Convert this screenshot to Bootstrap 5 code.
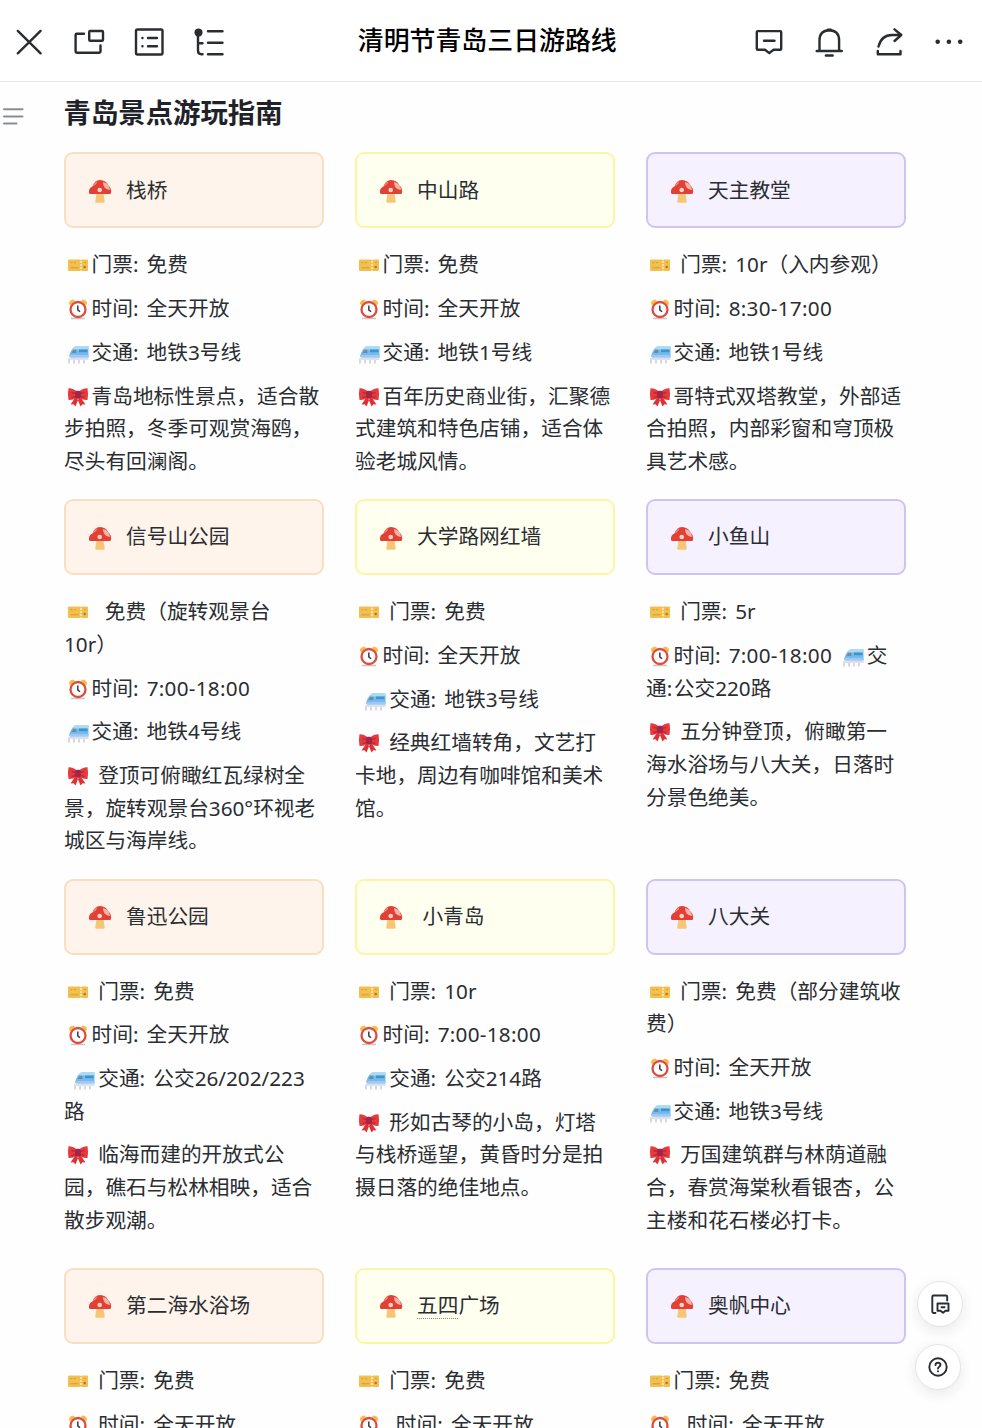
<!DOCTYPE html>
<html lang="zh-CN">
<head>
<meta charset="utf-8">
<meta name="viewport" content="width=device-width, initial-scale=1">
<title>清明节青岛三日游路线</title>
<link href="https://cdn.jsdelivr.net/npm/bootstrap@5.3.0/dist/css/bootstrap.min.css" rel="stylesheet">
<style>
html,body{height:1428px;overflow:hidden}
body{font-family:"Noto Sans","Noto Sans CJK SC",sans-serif;color:#2a2d31;background:#fefefe;font-size:20.7px;line-height:32.7px}
.topbar{height:82px;border-bottom:1px solid #e9e9e8;padding:2px 3px 0 0;background:#fff}
.tools{margin-left:-1.5px}
.tool{width:60px;height:32px;color:#2a2d30;display:flex;justify-content:center}
.ico{width:32px;height:32px;fill:none;stroke:currentColor;stroke-width:2.4;stroke-linecap:round;stroke-linejoin:round;flex:none}
.doc-title{font-family:"Noto Sans CJK SC",sans-serif;font-size:25.9px;font-weight:500;color:#000;margin:0;line-height:32px;padding:0 3px 5px 0}
.outline-toggle{position:absolute;left:2px;top:107px;width:22px;height:19px;stroke:#8a8d91;stroke-width:2;stroke-linecap:round}
.guide{padding:9px 0 0 64px;width:906px}
.guide h2{font-family:"Noto Sans CJK SC",sans-serif;font-size:27.4px;line-height:40px;font-weight:700;color:#1f2329;margin:0 0 21.4px -.5px}
.trio{display:grid;grid-template-columns:repeat(3,260px);column-gap:31px}
.callout{height:76px;border:2px solid;border-radius:9px;padding:0 0 1px 21.5px;margin-bottom:20px}
.peach{background:#fef4eb;border-color:#f8dfbf}
.lemon{background:#fffff0;border-color:#faf6a4}
.lilac{background:#f5f1fe;border-color:#cfc4f1}
.callout .shroom{width:24px;height:26px;margin-right:14.5px;flex:none;position:relative;top:1px}
.trio p{margin:0 0 11px;white-space:nowrap;word-spacing:1.3px;text-indent:-.5px}
.emo{width:22px;height:22px;margin:0 3px;vertical-align:-4px}
.cn{letter-spacing:1.5px}
.hm{letter-spacing:.28px}
.typo{text-decoration:underline dotted #888 1px;text-underline-offset:5px}
.fab{position:fixed;width:46px;height:46px;border-radius:50%;background:#fff;border:1px solid #e2e3e5;box-shadow:0 4px 14px rgba(31,35,41,.09);color:#2a2d30}
.fab svg{width:24px;height:24px;fill:none;stroke:currentColor;stroke-width:1.9;stroke-linecap:round;stroke-linejoin:round}
</style>
</head>
<body>
<svg class="d-none">
<symbol id="shroom" viewBox="0 0 24 26"><path d="M8.500 15h7l1.200 8.200q.2 1.500-1.500 1.600H8.800q-1.700-.1-1.500-1.600z" fill="#f6c678"/><path d="M1 14.800Q.4 10.300 4.500 8.500Q6.500 2.300 12 2Q18.200 2.300 20.200 7.200Q23.700 10 23 14.800Q23 16 21.500 16H2.500Q1.100 16 1 14.800z" fill="#e23f35"/><circle cx="11.700" cy="12" r="2.300" fill="#fbd3c7"/><path d="M15 4Q21.300 5.200 22 12Q18.500 12.200 16.500 9.300Q15 6.800 15 4z" fill="#f6b2a4"/><path d="M4.500 8.500Q6 4.700 9 3.200Q9.500 6 4.500 8.500z" fill="#f28b7e"/></symbol>
<symbol id="ticket" viewBox="0 0 22 22"><path d="M2 5.500H13l1 .8 1-.8h5q1 0 1 1V16q0 1-1 1h-5l-1-.8-1 .8H2q-1 0-1-1V6.500q0-1 1-1z" fill="#f4c04d"/><path d="M14 7v9" stroke="#fff4cf" stroke-width="1.300" stroke-dasharray="2 1"/><path d="M3.500 8.700h2m1.500 0h2M3.500 13.800h8" stroke="#c99a45" stroke-width="1"/><circle cx="17.700" cy="13" r="1.300" fill="#ad7938"/><path d="M17 8.500h2" stroke="#d39c36"/></symbol>
<symbol id="clock" viewBox="0 0 22 22"><path d="M2 6Q1.500 2 6.500 1.500L8 3 3.500 7.500zM20 6q.5-4-4.500-4.500L14 3l4.500 4.500z" fill="#f6bd4b"/><path d="M4 20.500h14" stroke="#c9c6c4" stroke-width="1.500"/><circle cx="11" cy="11.500" r="7.500" fill="#fff" stroke="#df4c3e" stroke-width="2.300"/><path d="M10.800 7.500v4.300l2.200 2" stroke="#383a4b" stroke-width="1.500" fill="none"/></symbol>
<symbol id="train" viewBox="0 0 22 22"><path d="M8 4.500h13.500V15.500H3.500Q2 15.500 2.300 13.500Q4 7 8 4.500z" fill="#6dbdee"/><path d="M8 4.500h13.500v3H5.500Q6.500 5.500 8 4.500z" fill="#a9dbf5"/><path d="M12 7.500h8.500v2.700H12z" fill="#4591cb"/><path d="M6.300 7.800h3V11H4.600z" fill="#74899a"/><path d="M2.300 13h19.200V15.500H3.500Q2 15.500 2.300 13z" fill="#a7c4f5"/><path d="M1 17h20.500" stroke="#c3cfd8" stroke-width="1.200"/><path d="M2 18v3.500m5-3.500v3.500m5-3.500v3.500m5-3.500v3.500" stroke="#c9ced3" stroke-width="1.500"/></symbol>
<symbol id="bow" viewBox="0 0 22 22"><path d="M9 10.500L3.500 18.500l3-.2L8.500 20.500 11.500 13zM13 10.500l5.500 8-3-.2-2 2.200L10.500 13z" fill="#dc3236"/><path d="M10 5.500Q5 1.800 1.500 2.300Q.3 8.500 1.500 14Q5.500 14.500 10 11.500zM12 5.500q5-3.700 8.500-3.200 1.200 6.200 0 11.700-4 .5-8.500-2.500z" fill="#e63a3d"/><path d="M9 7.500L4.500 6.500M9 10.500L4.500 11.500M13 7.500l4.500-1M13 10.500l4.500 1" stroke="#bb2b40" stroke-width="1.300"/><rect x="8" y="4.800" width="6" height="7.400" rx="2" fill="#a72447"/></symbol>
</svg>

<header class="topbar d-flex align-items-center">
  <div class="tools d-flex">
    <a class="tool"><svg class="ico" viewBox="0 0 32 32"><path d="M4.800 4.900l22.800 22.400M27.600 4.900L4.800 27.300"/></svg></a>
    <a class="tool"><svg class="ico" viewBox="0 0 32 32"><path d="M11 7.700H3.800Q2.600 7.700 2.600 8.900V25.600Q2.600 26.800 3.800 26.800H26.300Q27.500 26.800 27.500 25.600V19.500"/><rect x="16.200" y="5" width="13.800" height="9.800" rx="1"/></svg></a>
    <a class="tool"><svg class="ico" viewBox="0 0 32 32"><rect x="3" y="3.500" width="26.500" height="25" rx="1.500"/><path d="M9.400 12h.1M9.400 20.200h.1M15 12h9M15 20.200h9"/></svg></a>
    <a class="tool"><svg class="ico" viewBox="0 0 32 32"><circle cx="5.500" cy="6.500" r="2.900" fill="currentColor"/><path d="M5 8V24.500Q5 28.200 8.500 28.200H9.500M5 17.300H9.500M15 5.200H29.500M15 16.800H29.500M15 28.200H29.500"/></svg></a>
  </div>
  <h1 class="doc-title flex-grow-1 text-center">清明节青岛三日游路线</h1>
  <div class="d-flex">
    <a class="tool"><svg class="ico" viewBox="0 0 32 32"><path d="M4.800 5.100H27.200Q28.200 5.100 28.200 6.100V22.700Q28.200 23.700 27.200 23.700H20.500L16.300 27.100 12 23.700H4.800Q3.800 23.700 3.800 22.700V6.100Q3.800 5.100 4.800 5.100zM11 14.700H21.500"/></svg></a>
    <a class="tool"><svg class="ico" viewBox="0 0 32 32"><path d="M6.500 24.800V14.500Q6.500 4.500 16.300 4.300Q26.100 4.500 26.100 14.500V24.800M3.700 25H28.800M12.900 29.500H19.700M14.800 3.700H17.800"/></svg></a>
    <a class="tool"><svg class="ico" viewBox="0 0 32 32"><path d="M5.500 20.500Q8.500 9 19 9H27.500M21.500 3.300L28.300 9 21.500 15M4.800 25V28.300H27.500V25"/></svg></a>
    <a class="tool"><svg class="ico" viewBox="0 0 32 32"><g fill="currentColor" stroke="none"><circle cx="4.700" cy="15.800" r="2.300"/><circle cx="15.900" cy="15.800" r="2.300"/><circle cx="27.200" cy="15.800" r="2.300"/></g></svg></a>
  </div>
</header>
<svg class="outline-toggle" viewBox="0 0 22 19"><path d="M2 2.300H20.500M2 9.500H20.500M2 16.500H14.500"/></svg>

<main class="guide">
  <h2>青岛景点游玩指南</h2>

  <div class="trio" style="margin-bottom:10.5px">
    <section>
      <div class="callout peach d-flex align-items-center"><svg class="shroom"><use href="#shroom"/></svg>栈桥</div>
      <p><svg class="emo"><use href="#ticket"/></svg>门票<span class="cn">:</span> 免费</p>
      <p><svg class="emo"><use href="#clock"/></svg>时间<span class="cn">:</span> 全天开放</p>
      <p><svg class="emo"><use href="#train"/></svg>交通<span class="cn">:</span> 地铁3号线</p>
      <p><svg class="emo"><use href="#bow"/></svg>青岛地标性景点，适合散<br>步拍照，冬季可观赏海鸥，<br>尽头有回澜阁。</p>
    </section>
    <section>
      <div class="callout lemon d-flex align-items-center"><svg class="shroom"><use href="#shroom"/></svg>中山路</div>
      <p><svg class="emo"><use href="#ticket"/></svg>门票<span class="cn">:</span> 免费</p>
      <p><svg class="emo"><use href="#clock"/></svg>时间<span class="cn">:</span> 全天开放</p>
      <p><svg class="emo"><use href="#train"/></svg>交通<span class="cn">:</span> 地铁1号线</p>
      <p><svg class="emo"><use href="#bow"/></svg>百年历史商业街，汇聚德<br>式建筑和特色店铺，适合体<br>验老城风情。</p>
    </section>
    <section>
      <div class="callout lilac d-flex align-items-center"><svg class="shroom"><use href="#shroom"/></svg>天主教堂</div>
      <p><svg class="emo"><use href="#ticket"/></svg>&nbsp;门票<span class="cn">:</span> 10r（入内参观）</p>
      <p><svg class="emo"><use href="#clock"/></svg>时间<span class="cn">:</span> <span class="hm">8:30-17:00</span></p>
      <p><svg class="emo"><use href="#train"/></svg>交通<span class="cn">:</span> 地铁1号线</p>
      <p><svg class="emo"><use href="#bow"/></svg>哥特式双塔教堂，外部适<br>合拍照，内部彩窗和穹顶极<br>具艺术感。</p>
    </section>
  </div>

  <div class="trio" style="margin-bottom:10.5px">
    <section>
      <div class="callout peach d-flex align-items-center"><svg class="shroom"><use href="#shroom"/></svg>信号山公园</div>
      <p><svg class="emo"><use href="#ticket"/></svg>&nbsp;&nbsp;免费（旋转观景台<br>10r）</p>
      <p><svg class="emo"><use href="#clock"/></svg>时间<span class="cn">:</span> <span class="hm">7:00-18:00</span></p>
      <p><svg class="emo"><use href="#train"/></svg>交通<span class="cn">:</span> 地铁4号线</p>
      <p><svg class="emo"><use href="#bow"/></svg>&nbsp;登顶可俯瞰红瓦绿树全<br>景，旋转观景台360°环视老<br>城区与海岸线。</p>
    </section>
    <section>
      <div class="callout lemon d-flex align-items-center"><svg class="shroom"><use href="#shroom"/></svg>大学路网红墙</div>
      <p><svg class="emo"><use href="#ticket"/></svg>&nbsp;门票<span class="cn">:</span> 免费</p>
      <p><svg class="emo"><use href="#clock"/></svg>时间<span class="cn">:</span> 全天开放</p>
      <p>&nbsp;<svg class="emo"><use href="#train"/></svg>交通<span class="cn">:</span> 地铁3号线</p>
      <p><svg class="emo"><use href="#bow"/></svg>&nbsp;经典红墙转角，文艺打<br>卡地，周边有咖啡馆和美术<br>馆。</p>
    </section>
    <section>
      <div class="callout lilac d-flex align-items-center"><svg class="shroom"><use href="#shroom"/></svg>小鱼山</div>
      <p><svg class="emo"><use href="#ticket"/></svg>&nbsp;门票<span class="cn">:</span> 5r</p>
      <p><svg class="emo"><use href="#clock"/></svg>时间<span class="cn">:</span> <span class="hm">7:00-18:00</span> <svg class="emo"><use href="#train"/></svg>交<br>通<span class="cn">:</span>公交220路</p>
      <p><svg class="emo"><use href="#bow"/></svg>&nbsp;五分钟登顶，俯瞰第一<br>海水浴场与八大关，日落时<br>分景色绝美。</p>
    </section>
  </div>

  <div class="trio" style="margin-bottom:20.5px">
    <section>
      <div class="callout peach d-flex align-items-center"><svg class="shroom"><use href="#shroom"/></svg>鲁迅公园</div>
      <p><svg class="emo"><use href="#ticket"/></svg>&nbsp;门票<span class="cn">:</span> 免费</p>
      <p><svg class="emo"><use href="#clock"/></svg>时间<span class="cn">:</span> 全天开放</p>
      <p>&nbsp;<svg class="emo"><use href="#train"/></svg>交通<span class="cn">:</span> 公交26/202/223<br>路</p>
      <p><svg class="emo"><use href="#bow"/></svg>&nbsp;临海而建的开放式公<br>园，礁石与松林相映，适合<br>散步观潮。</p>
    </section>
    <section>
      <div class="callout lemon d-flex align-items-center"><svg class="shroom"><use href="#shroom"/></svg>&nbsp;小青岛</div>
      <p><svg class="emo"><use href="#ticket"/></svg>&nbsp;门票<span class="cn">:</span> 10r</p>
      <p><svg class="emo"><use href="#clock"/></svg>时间<span class="cn">:</span> <span class="hm">7:00-18:00</span></p>
      <p>&nbsp;<svg class="emo"><use href="#train"/></svg>交通<span class="cn">:</span> 公交214路</p>
      <p><svg class="emo"><use href="#bow"/></svg>&nbsp;形如古琴的小岛，灯塔<br>与栈桥遥望，黄昏时分是拍<br>摄日落的绝佳地点。</p>
    </section>
    <section>
      <div class="callout lilac d-flex align-items-center"><svg class="shroom"><use href="#shroom"/></svg>八大关</div>
      <p><svg class="emo"><use href="#ticket"/></svg>&nbsp;门票<span class="cn">:</span> 免费（部分建筑收<br>费）</p>
      <p><svg class="emo"><use href="#clock"/></svg>时间<span class="cn">:</span> 全天开放</p>
      <p><svg class="emo"><use href="#train"/></svg>交通<span class="cn">:</span> 地铁3号线</p>
      <p><svg class="emo"><use href="#bow"/></svg>&nbsp;万国建筑群与林荫道融<br>合，春赏海棠秋看银杏，公<br>主楼和花石楼必打卡。</p>
    </section>
  </div>

  <div class="trio">
    <section>
      <div class="callout peach d-flex align-items-center"><svg class="shroom"><use href="#shroom"/></svg>第二海水浴场</div>
      <p><svg class="emo"><use href="#ticket"/></svg>&nbsp;门票<span class="cn">:</span> 免费</p>
      <p><svg class="emo"><use href="#clock"/></svg>&nbsp;时间<span class="cn">:</span> 全天开放</p>
    </section>
    <section>
      <div class="callout lemon d-flex align-items-center"><svg class="shroom"><use href="#shroom"/></svg><span class="typo">五四</span>广场</div>
      <p><svg class="emo"><use href="#ticket"/></svg>&nbsp;门票<span class="cn">:</span> 免费</p>
      <p><svg class="emo"><use href="#clock"/></svg>&nbsp;&nbsp;时间<span class="cn">:</span> 全天开放</p>
    </section>
    <section>
      <div class="callout lilac d-flex align-items-center"><svg class="shroom"><use href="#shroom"/></svg>奥帆中心</div>
      <p><svg class="emo"><use href="#ticket"/></svg>门票<span class="cn">:</span> 免费</p>
      <p><svg class="emo"><use href="#clock"/></svg>&nbsp;&nbsp;时间<span class="cn">:</span> 全天开放</p>
    </section>
  </div>
</main>

<a class="fab d-flex align-items-center justify-content-center" style="left:916.500px;top:1281px"><svg viewBox="0 0 24 24"><path d="M7.500 21H5.500Q4.300 21 4.300 19.800V4.700Q4.300 3.500 5.500 3.500H18Q19.200 3.500 19.200 4.700V8.500M9.500 11.500H20.500V18.800H17.500L15 20.800 12.500 18.800H9.500zM13.500 15.200H16.500"/></svg></a>
<a class="fab d-flex align-items-center justify-content-center" style="left:915px;top:1344px"><svg viewBox="0 0 24 24"><circle cx="12" cy="12" r="8.700"/><path d="M9.500 10Q9.700 7.700 12 7.700T14.500 9.800Q14.500 11 13.200 11.700Q12 12.400 12 13.600M12 16.300v.1"/></svg></a>
<script src="https://cdn.jsdelivr.net/npm/bootstrap@5.3.0/dist/js/bootstrap.bundle.min.js"></script>
</body>
</html>
